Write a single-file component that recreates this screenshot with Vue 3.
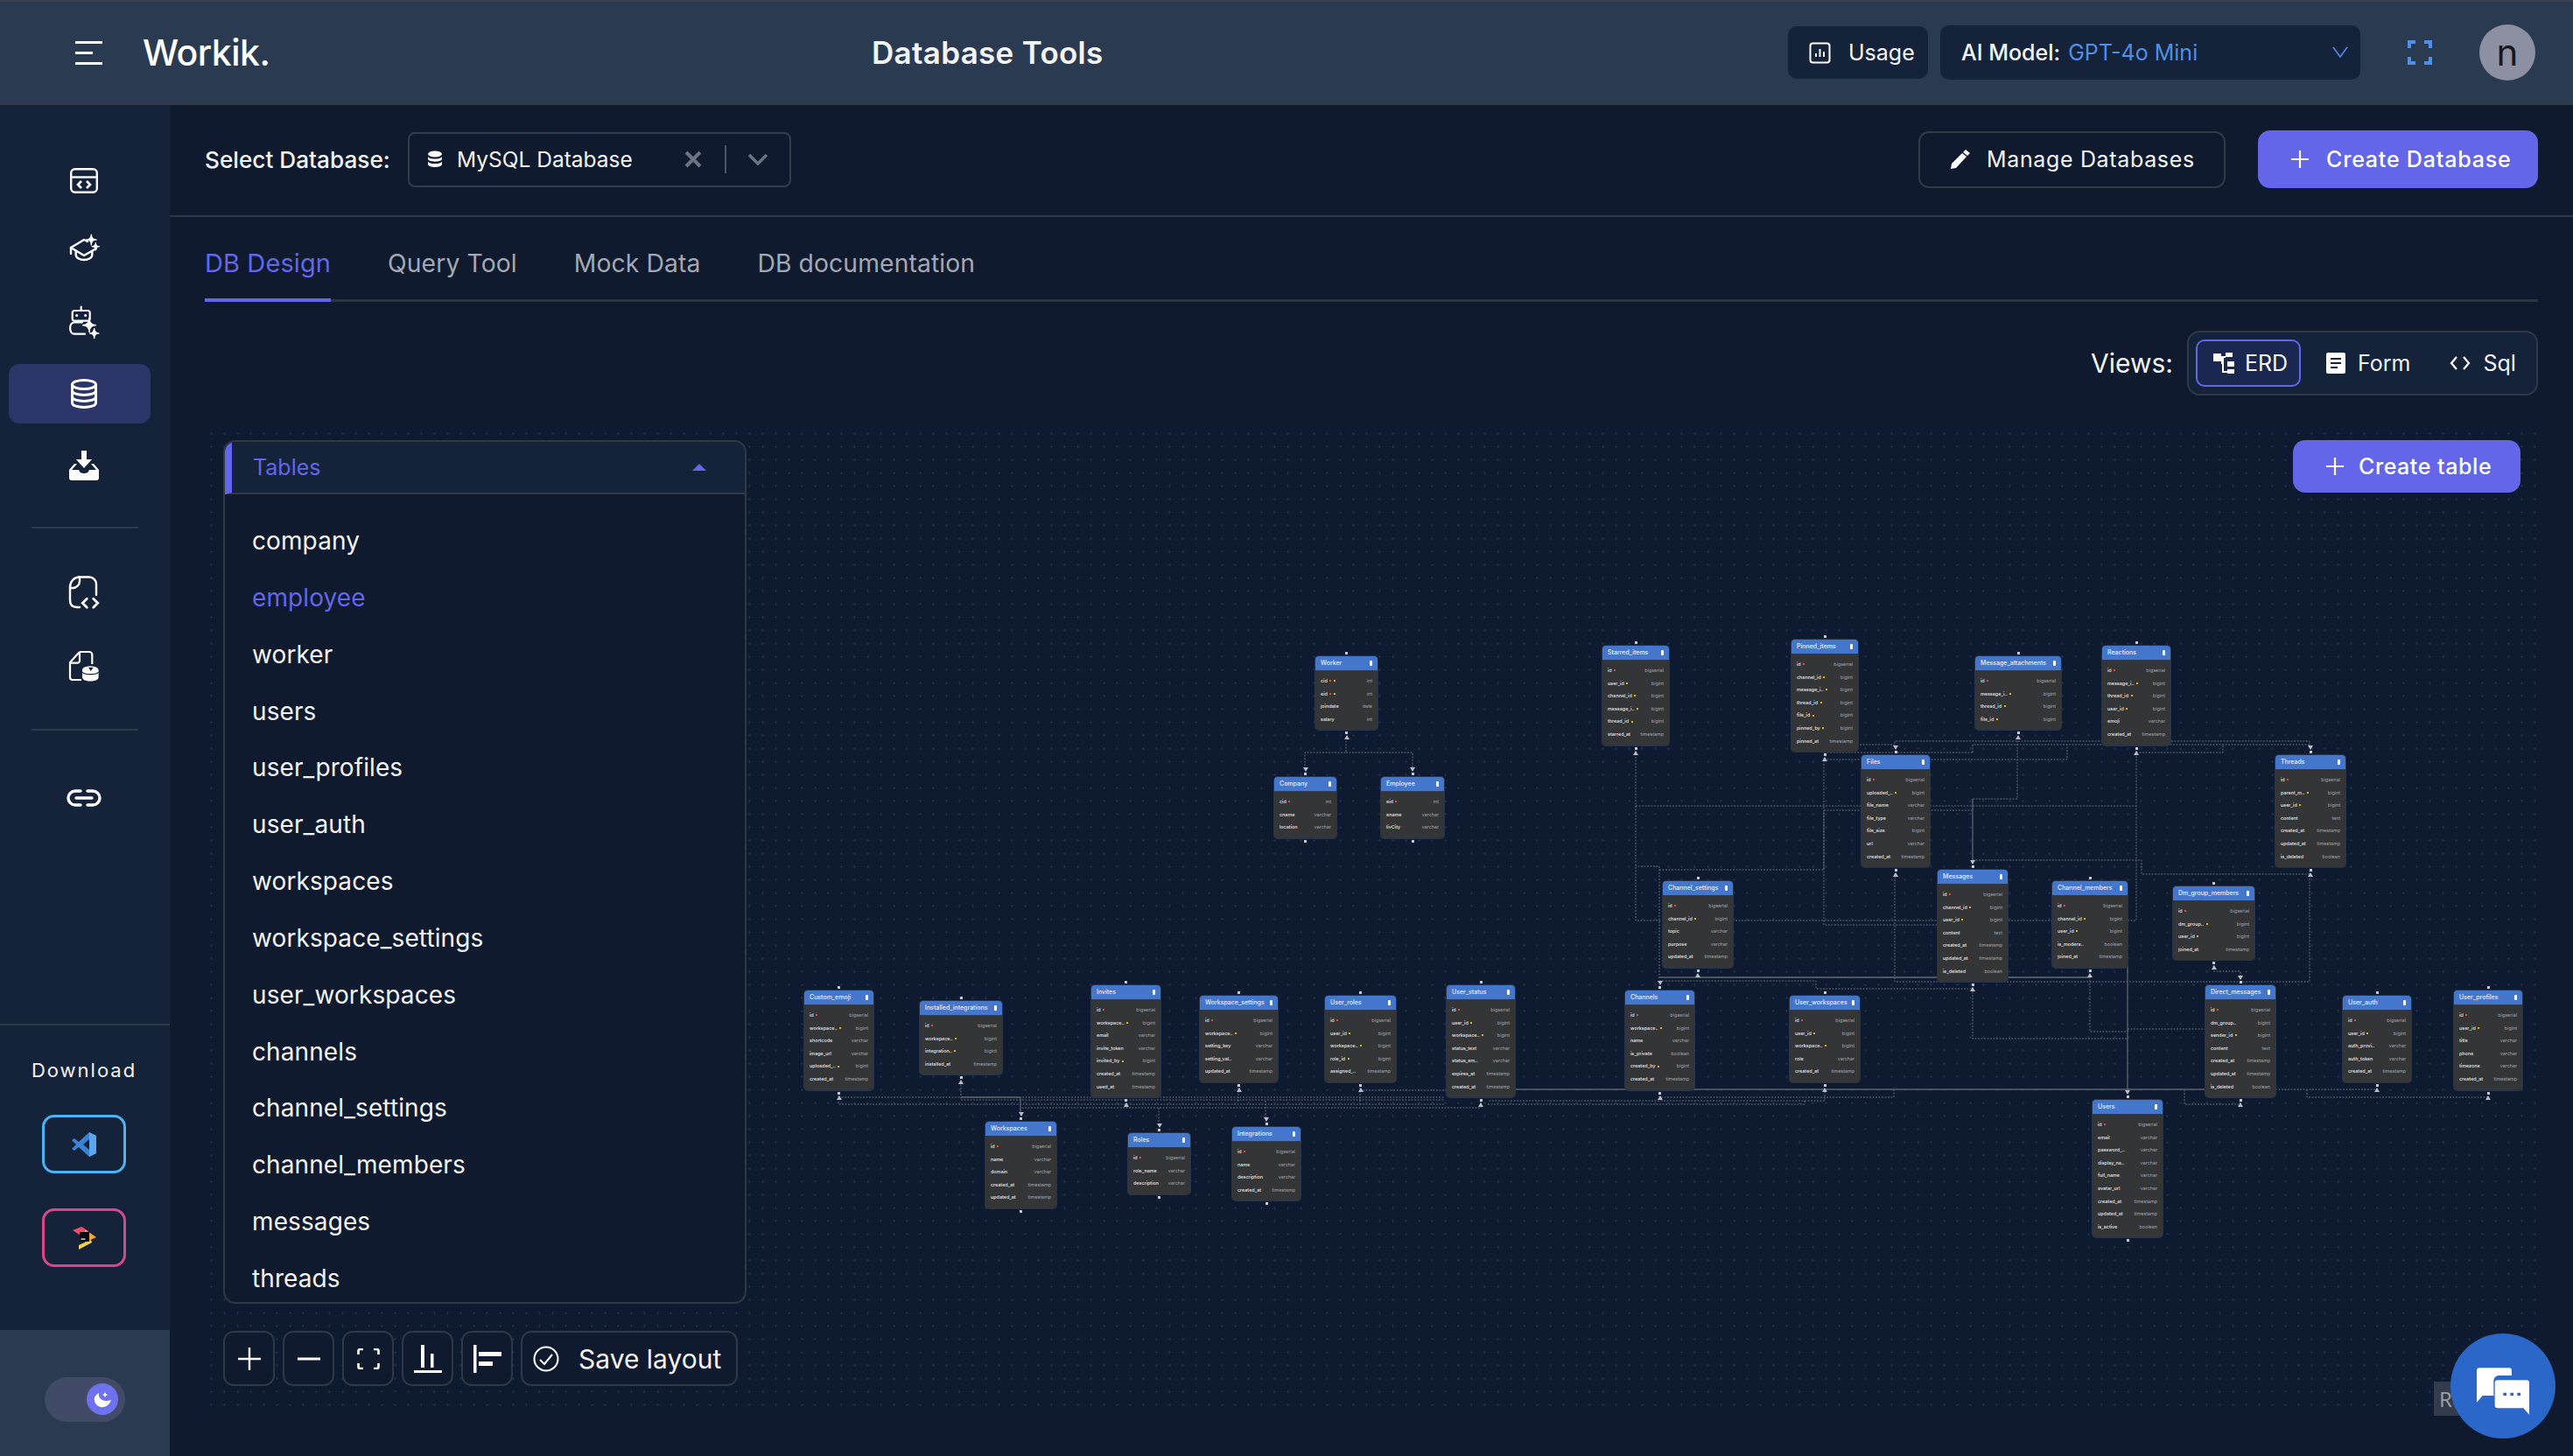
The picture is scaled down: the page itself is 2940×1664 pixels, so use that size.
<script setup>
const tables = ['company','employee','worker','users','user_profiles','user_auth','workspaces','workspace_settings','user_workspaces','channels','channel_settings','channel_members','messages','threads']

const T = { b: 'bigint', s: 'bigserial', v: 'varchar', t: 'timestamp', o: 'boolean', x: 'text', i: 'int', d: 'date' }
const parse = s => s.split(' ').map(f => {
  const [raw, ty] = f.split(':')
  const pk = raw.includes('*')
  const fk = raw.includes('+')
  return { name: raw.replace(/[*+]/g, ''), pk, fk, type: T[ty] }
})
const raw = [
  ['Worker',1503,751,71,'cid*+:i eid*+:i joindate:d salary:i',0,1],
  ['Company',1456,889,71,'cid*:i cname:v location:v',1,0],
  ['Employee',1578,889,72,'eid*:i ename:v livCity:v',1,0],
  ['Starred_items',1831,739,76,'id*:s user_id+:b channel_id+:b message_i..+:b thread_id+:b starred_at:t',0,1],
  ['Pinned_items',2047,732,76,'id*:s channel_id+:b message_i..+:b thread_id+:b file_id+:b pinned_by+:b pinned_at:t',0,1],
  ['Files',2127,864,78,'id*:s uploaded_..+:b file_name:v file_type:v file_size:b url:v created_at:t',1,1],
  ['Channel_settings',1900,1008,80,'id*:s channel_id+:b topic:v purpose:v updated_at:t',0,1],
  ['Message_attachments',2257,751,98,'id*:s message_i..+:b thread_id+:b file_id+:b',0,1],
  ['Reactions',2402,739,78,'id*:s message_i..+:b thread_id+:b user_id+:b emoji:v created_at:t',0,1],
  ['Threads',2600,864,80,'id*:s parent_m..+:b user_id+:b content:x created_at:t updated_at:t is_deleted:o',1,1],
  ['Messages',2214,995,80,'id*:s channel_id+:b user_id+:b content:x created_at:t updated_at:t is_deleted:o',1,1],
  ['Channel_members',2345,1008,86,'id*:s channel_id+:b user_id+:b is_modera..:o joined_at:t',0,1],
  ['Dm_group_members',2483,1014,93,'id*:s dm_group..+:b user_id+:b joined_at:t',0,1],
  ['Custom_emoji',919,1133,79,'id*:s workspace..+:b shortcode:v image_url:v uploaded_..+:b created_at:t',0,1],
  ['Installed_integrations',1051,1145,94,'id*:s workspace..+:b integration..+:b installed_at:t',0,1],
  ['Invites',1247,1127,79,'id*:s workspace..+:b email:v invite_token:v invited_by+:b created_at:t used_at:t',0,1],
  ['Workspace_settings',1371,1139,89,'id*:s workspace..+:b setting_key:v setting_val..:v updated_at:t',0,1],
  ['User_roles',1514,1139,81,'id*:s user_id+:b workspace..+:b role_id+:b assigned_..:t',0,1],
  ['User_status',1653,1127,78,'id*:s user_id+:b workspace..+:b status_text:v status_em..:v expires_at:t created_at:t',0,1],
  ['Workspaces',1126,1283,81,'id*:s name:v domain:v created_at:t updated_at:t',1,0],
  ['Roles',1289,1296,71,'id*:s role_name:v description:v',1,0],
  ['Integrations',1408,1289,78,'id*:s name:v description:v created_at:t',1,0],
  ['Channels',1857,1133,79,'id*:s workspace..+:b name:v is_private:o created_by+:b created_at:t',1,1],
  ['User_workspaces',2045,1139,80,'id*:s user_id+:b workspace..+:b role:v created_at:t',0,1],
  ['Direct_messages',2520,1127,80,'id*:s dm_group..:b sender_id+:b content:x created_at:t updated_at:t is_deleted:o',1,1],
  ['User_auth',2677,1139,78,'id*:s user_id+:b auth_provi..:v auth_token:v created_at:t',0,1],
  ['User_profiles',2804,1133,78,'id*:s user_id+:b title:v phone:v timezone:v created_at:t',0,1],
  ['Users',2391,1258,80,'id*:s email:v password_..:v display_na..:v full_name:v avatar_url:v created_at:t updated_at:t is_active:o',1,0],
]
const ORIGIN_X = 234
const ORIGIN_Y = 489
const nodes = raw.map(([title, x, y, w, f, top, bottom]) => ({
  title, top, bottom, fields: parse(f),
  style: { left: (x - ORIGIN_X) + 'px', top: (y - ORIGIN_Y) + 'px', width: w + 'px' },
}))

const dashed = [
  'M1538 845V862H1491V880M1538 862H1614V880',
  'M1869 860V1054H2441V860',
  'M1869 923H2441',
  'M2084 868V1059H2214',
  'M2084 928H2254',
  'M1896 1120V992H1869M1896 996H2084V930',
  'M1939 1115V1119H2388V1115',
  'M1896 1123H2075V1132H2254V1130',
  'M2254 1132V1189H2431',
  'M2388 1115V1181H2431V1178H2520',
  'M2165 1000V1124H2639V1000',
  'M2529 1105V1112H2560V1118',
  'M2254 985H2447V1001H2639',
  'M2305 845V915H2254',
  'M2165 855V849H2639V855',
  'M2125 853H2165M2254 862V853H2639',
  'M2084 862H2254M2084 870H2362V853',
  'M2441 862H2540V853',
  'M2600 1247H2716V1245',
  'M2164 1247V1256H1896V1255',
  'M2085 1246V1260H1700',
  'M2062 1260V1264H1700',
  'M2560 1262V1264H2496V1247',
  'M2842 1255V1256H2636V1247',
  'M958 1254V1264H1650M958 1256H1650',
  'M1098 1238V1259H1650',
  'M1287 1262V1268',
  'M1415 1245V1262',
  'M1554 1245V1266',
  'M1324 1268V1287',
  'M1446 1260V1280',
  'M1557 1248H1653',
  'M1692 1262V1268H1166',
]
const solid = [
  'M2254 915V985',
  'M2431 1106V1250',
  'M1731 1247H2520',
  'M1166 1256V1275',
  'M1896 1119H2388',
  'M1098 1256H1166',
]
</script>

<template>
  <div class="app">
    <header class="topbar">
      <div class="brand">
        <span class="burger"><i></i><i class="short"></i><i></i></span>
        <span class="logo">Workik.</span>
      </div>
      <div class="page-title">Database Tools</div>
      <div class="top-right">
        <button class="usage">
          <svg width="25" height="25" viewBox="0 0 25 25" fill="none" stroke="#fff" stroke-width="2"><rect x="1.5" y="1.5" width="22" height="22" rx="3"/><path d="M8 17v-4M12.5 17V8M17 17v-6"/></svg>
          <span>Usage</span>
        </button>
        <div class="model">
          <span class="model-label">AI Model:</span>
          <span class="model-val">GPT-4o Mini</span>
          <svg class="model-chev" width="18" height="14" viewBox="0 0 18 14" fill="none" stroke="#4f8fe8" stroke-width="1.6"><path d="M1 1l8 11 8-11"/></svg>
        </div>
        <svg class="fs" width="28" height="28" viewBox="0 0 28 28" fill="none" stroke="#4f8fe8" stroke-width="4"><path d="M2 9V2h7M19 2h7v7M26 19v7h-7M9 26H2v-7"/></svg>
        <div class="avatar">n</div>
      </div>
    </header>

    <div class="body">
      <aside class="side">
        <nav class="nav">
          <div class="nav-item">
            <svg width="40" height="40" viewBox="0 0 40 40" fill="none" stroke="#fff" stroke-width="2.400"><rect x="5.200" y="9.200" width="29.600" height="26.600" rx="4.500"/><path d="M5 18.500h30"/><path d="M17 23l-4 4 4 4M23 23l4 4-4 4" stroke-width="2.600"/></svg>
          </div>
          <div class="nav-item">
            <svg width="40" height="40" viewBox="0 0 40 40" fill="none" stroke="#fff" stroke-width="2.400" stroke-linejoin="round" stroke-linecap="round"><path d="M24 10L20 8 5 17l15 9 14-8"/><path d="M5 17v7"/><path d="M10.700 20.500V25c0 4 5 6 9.300 6s9.300-2 9.300-6v-4"/><path d="M28.300 2Q28.300 8 34.300 8 28.300 8 28.300 14 28.300 8 22.300 8 28.300 8 28.300 2zM33.300 11.500Q33.300 15.700 37.500 15.700 33.300 15.700 33.300 19.900 33.300 15.700 29.100 15.700 33.300 15.700 33.300 11.500z" fill="#fff" stroke="#fff" stroke-width="1.200"/></svg>
          </div>
          <div class="nav-item">
            <svg width="40" height="40" viewBox="0 0 40 40" fill="none" stroke="#fff" stroke-width="2.200" stroke-linecap="round"><rect x="6.700" y="7" width="20" height="11.700" rx="2.500"/><path d="M16.700 2.700V7"/><path d="M18 20.300H9c-6.500 0-6.500 13.400 0 13.400h12"/><circle cx="11.700" cy="12.500" r="1.500" fill="#fff" stroke="none"/><circle cx="21.700" cy="12.500" r="1.500" fill="#fff" stroke="none"/><path d="M26 15Q26 23.700 34 23.700 26 23.700 26 32 26 23.700 18 23.700 26 23.700 26 15zM31.700 27Q31.700 33 37.500 33 31.700 33 31.700 39 31.700 33 26 33 31.700 33 31.700 27z" fill="#fff" stroke="#fff" stroke-width="1.200"/></svg>
          </div>
          <div class="nav-item active">
            <svg width="32" height="34" viewBox="0 0 32 34" fill="none" stroke="#fff" stroke-width="3"><ellipse cx="16" cy="6.500" rx="13.500" ry="5"/><path d="M2.500 6.500v21c0 6.500 27 6.500 27 0v-21"/><path d="M2.500 13.500c0 6.500 27 6.500 27 0M2.500 20.500c0 6.500 27 6.500 27 0"/></svg>
          </div>
          <div class="nav-item">
            <svg width="36" height="34" viewBox="0 0 36 34" fill="#fff"><path d="M15 0h6v10h6l-9 10-9-10h6z"/><path d="M7 15h3l-6 7h8c1 3 3 4 6 4s5-1 6-4h8l-6-7h3l6 7v9a3 3 0 0 1-3 3H4a3 3 0 0 1-3-3v-9z"/></svg>
          </div>
        </nav>
        <hr class="sep first" />
        <div class="nav-item tool">
          <svg width="40" height="40" viewBox="0 0 40 40" fill="none" stroke="#fff" stroke-width="2.400" stroke-linecap="round" stroke-linejoin="round"><path d="M14 2.500H26a8 8 0 0 1 8 8V23"/><path d="M14 2.500C8 3 4 8 4 14v15c0 5 3 8 8 8h3"/><path d="M4 15h3a8 8 0 0 0 8-8V3"/><path d="M23.300 27.300l-5 5 5 5M30.700 27.300l5 5-5 5" stroke-width="2.800" stroke-linejoin="miter"/></svg>
        </div>
        <div class="nav-item tool second">
          <svg width="40" height="40" viewBox="0 0 40 40" fill="none" stroke="#fff" stroke-width="2.200" stroke-linejoin="round"><path d="M15 4h11a3.300 3.300 0 0 1 3.300 3.300V18"/><path d="M15 4L4 16v17a3 3 0 0 0 3 3h10"/><path d="M15 4v10a2.700 2.700 0 0 1-2.700 2.700H4"/><path d="M18 25c0-6.500 18.600-6.500 18.600 0v8c0 6-18.600 6-18.600 0z" fill="#fff" stroke="none"/><path d="M25 21.700h5.700L27.700 26z" fill="#14233a" stroke="none"/><path d="M18 27c2 3.500 16.600 3.500 18.600 0" stroke="#14233a" stroke-width="1.200"/></svg>
        </div>
        <hr class="sep" />
        <div class="nav-item link">
          <svg width="40" height="20" viewBox="0 0 40 20" fill="none" stroke="#fff" stroke-width="3.400" stroke-linecap="round"><path d="M16 2H10a8 8 0 0 0 0 16h6M24 2h6a8 8 0 0 1 0 16h-6M11 10h18"/></svg>
        </div>
        <div class="side-spacer"></div>
        <div class="download">
          <div class="dl-title">Download</div>
          <div class="dl-btn vs">
            <svg width="30" height="30" viewBox="0 0 30 30"><path d="M21 1l8 4v20l-8 4-12-11-5 4-3-2 5-5-5-5 3-2 5 4z" fill="#3b82d6"/><path d="M21 1l8 4v20l-8 4z" fill="#5aa7ee"/><path d="M21 9l-7 6 7 6z" fill="#14233a"/></svg>
          </div>
          <div class="dl-btn jb">
            <svg width="27" height="26" viewBox="0 0 27 26"><path d="M0 4l10-4 8 5-9 5z" fill="#ef4b6c"/><path d="M14 3l13 9-13 6z" fill="#f5a63a"/><path d="M7 21l14-6 1 3-15 8z" fill="#f7d23e"/><rect x="8" y="6" width="11" height="11" fill="#0b0b0b"/><rect x="9.500" y="13.500" width="5" height="1.200" fill="#fff"/></svg>
          </div>
        </div>
        <div class="theme">
          <div class="toggle">
            <div class="knob">
              <svg width="24" height="22" viewBox="0 0 24 22" fill="#fff"><path d="M8 4c-1 6 4 11 14 8-2 6-7 9-12 8S2 14 3 9c1-2 3-4 5-5z"/><path d="M15 3l1 2 2 1-2 1-1 2-1-2-2-1 2-1z"/></svg>
            </div>
          </div>
        </div>
      </aside>

      <main class="main">
        <section class="toolbar">
          <span class="sel-label">Select Database:</span>
          <div class="select">
            <svg width="18" height="20" viewBox="0 0 18 20" fill="#fff"><ellipse cx="9" cy="4" rx="8" ry="3.500"/><path d="M1 7c1 3.500 15 3.500 16 0v3c-1 3.500-15 3.500-16 0zM1 12.500c1 3.500 15 3.500 16 0v3.500c-1 4-15 4-16 0z"/></svg>
            <span class="sel-val">MySQL Database</span>
            <svg class="sel-x" width="20" height="20" viewBox="0 0 20 20" fill="none" stroke="#6b7280" stroke-width="4"><path d="M2 2l16 16M18 2L2 18"/></svg>
            <span class="sel-div"></span>
            <svg width="24" height="14" viewBox="0 0 24 14" fill="none" stroke="#6b7280" stroke-width="3.600"><path d="M2 2l10 10L22 2"/></svg>
          </div>
          <div class="toolbar-right">
            <button class="ghost">
              <svg width="24" height="24" viewBox="0 0 24 24" fill="#fff"><path d="M18 1l5 4-3 3-5-4zM14 5l5 4L7 22l-6 1 1-6z"/></svg>
              Manage Databases
            </button>
            <button class="primary db">
              <svg width="20" height="20" viewBox="0 0 20 20" stroke="#fff" stroke-width="2.200"><path d="M10 0v20M0 10h20"/></svg>
              Create Database
            </button>
          </div>
        </section>

        <section class="tabs">
          <div class="tab on">DB Design</div>
          <div class="tab">Query Tool</div>
          <div class="tab">Mock Data</div>
          <div class="tab">DB documentation</div>
        </section>

        <section class="views">
          <span class="views-label">Views:</span>
          <div class="view-group">
            <div class="view on">
              <svg width="24" height="24" viewBox="0 0 24 24" fill="#fff"><rect x="0" y="1" width="9" height="9"/><rect x="14" y="0" width="8" height="5"/><rect x="16" y="10" width="8" height="6"/><rect x="16" y="19" width="8" height="5"/><path d="M9 4h5v2h-2v15h4v2h-6V13H9z"/></svg>
              ERD
            </div>
            <div class="view form">
              <svg width="22" height="24" viewBox="0 0 22 24"><rect width="22" height="24" rx="2" fill="#fff"/><path d="M5 7h12M5 12h12M5 17h8" stroke="#14233a" stroke-width="2.200"/></svg>
              Form
            </div>
            <div class="view sql">
              <svg width="24" height="18" viewBox="0 0 24 18" fill="none" stroke="#fff" stroke-width="2.200"><path d="M8 2L2 9l6 7M16 2l6 7-6 7"/></svg>
              Sql
            </div>
          </div>
        </section>

        <section class="canvas">
          <svg class="edges" width="2666" height="1128" viewBox="234 490 2666 1128" fill="none">
            <path v-for="d in dashed" :key="d" :d="d" stroke="#636c7a" stroke-width="1" stroke-dasharray="2 1.500" />
            <path v-for="d in solid" :key="d" :d="d" stroke="#5c6470" stroke-width="1.300" />
          </svg>

          <div v-for="n in nodes" :key="n.title" class="node" :style="n.style">
            <span class="handle top"></span>
            <span v-if="n.top" class="arrow down"></span>
            <span class="handle bot"></span>
            <span v-if="n.bottom" class="arrow up"></span>
            <div class="node-head">
              <span class="node-title">{{ n.title }}</span>
              <i class="node-menu"></i>
            </div>
            <div class="node-body">
              <div v-for="f in n.fields" :key="f.name" class="row">
                <span class="fname">{{ f.name }}</span>
                <i v-if="f.pk" class="dot pk"></i>
                <i v-if="f.fk" class="dot fk"></i>
                <span class="ftype">{{ f.type }}</span>
              </div>
            </div>
          </div>

          <div class="panel">
            <div class="panel-head">
              <span>Tables</span>
              <i class="caret"></i>
            </div>
            <div class="panel-list">
              <div v-for="t in tables" :key="t" class="item" :class="{ sel: t === 'employee' }">{{ t }}</div>
            </div>
          </div>

          <div class="controls">
            <button class="ctl">
              <svg width="26" height="26" viewBox="0 0 26 26" stroke="#fff" stroke-width="2.400"><path d="M13 0v26M0 13h26"/></svg>
            </button>
            <button class="ctl">
              <svg width="26" height="4" viewBox="0 0 26 4" stroke="#fff" stroke-width="3"><path d="M0 2h26"/></svg>
            </button>
            <button class="ctl">
              <svg width="26" height="24" viewBox="0 0 26 24" fill="none" stroke="#fff" stroke-width="2.600"><path d="M1.500 7V3a2 2 0 0 1 2-2H7M19 1h3.500a2 2 0 0 1 2 2v4M24.500 17v4a2 2 0 0 1-2 2H19M7 23H3.500a2 2 0 0 1-2-2v-4"/></svg>
            </button>
            <button class="ctl">
              <svg width="32" height="32" viewBox="0 0 32 32" fill="#fff"><rect x="8" y="0" width="4" height="26"/><rect x="19" y="10" width="3.500" height="16"/><rect x="0" y="29" width="32" height="3"/></svg>
            </button>
            <button class="ctl">
              <svg width="32" height="32" viewBox="0 0 32 32" fill="#fff"><rect x="0" y="0" width="3.500" height="32"/><rect x="6" y="8" width="26" height="5"/><rect x="6" y="19" width="16" height="5"/></svg>
            </button>
            <button class="ctl save">
              <svg width="30" height="30" viewBox="0 0 30 30" fill="none" stroke="#fff" stroke-width="2"><circle cx="15" cy="15" r="13.500"/><path d="M8 16l5 5 9-11"/></svg>
              <span>Save layout</span>
            </button>
          </div>

          <button class="primary add-table">
            <svg width="20" height="20" viewBox="0 0 20 20" stroke="#fff" stroke-width="2.200"><path d="M10 0v20M0 10h20"/></svg>
            Create table
          </button>
        </section>
      </main>
    </div>

    <div class="recaptcha">Re</div>
    <div class="chat">
      <svg width="120" height="120" viewBox="0 0 360 360">
        <circle cx="180" cy="180" r="180" fill="#2b67c8"/>
        <path d="M100 118h100a10 10 0 0 1 10 10v16h-44a18 18 0 0 0-18 18v51H110l-20 23V128a10 10 0 0 1 10-10z" fill="#fff"/>
        <path d="M162 160h98a10 10 0 0 1 10 10v108l-20-22H162a10 10 0 0 1-10-10v-76a10 10 0 0 1 10-10z" fill="#fff"/>
        <path d="M181 203h11v10h-11zM205 203h11v10h-11zM229 203h11v10h-11z" fill="#2b67c8"/>
      </svg>
    </div>
  </div>
</template>

<style scoped>
.app { width: 2940px; height: 1664px; display: flex; flex-direction: column; overflow: hidden; background: #0f1a2e; color: #f3f4f6; font-family: Inter, "Noto Sans", "Liberation Sans", sans-serif; position: relative; }
button { font-family: inherit; cursor: pointer; }

.topbar { flex: 0 0 120px; box-sizing: border-box; display: flex; align-items: center; background: #2a3a50; border-top: 2px solid #3a424f; border-bottom: 2px solid #333b48; }
.brand { flex: 0 0 996px; display: flex; align-items: center; padding-left: 86px; box-sizing: border-box; gap: 46px; }
.burger { display: flex; flex-direction: column; gap: 9px; width: 31px; }
.burger i { display: block; height: 3px; background: #fff; }
.burger i.short { width: 20px; }
.logo { font-size: 41px; font-weight: 500; color: #fff; letter-spacing: -0.5px; }
.page-title { font-size: 35px; font-weight: 600; color: #f3f4f6; letter-spacing: 0.3px; }
.top-right { margin-left: auto; display: flex; align-items: center; padding-right: 43px; }
.usage { width: 160px; height: 60px; display: flex; align-items: center; gap: 20px; padding: 0 0 0 24px; border: 0; border-radius: 10px; background: #15233a; color: #f3f4f6; font-size: 25px; font-weight: 400; box-sizing: border-box; }
.model { width: 480px; height: 62px; margin-left: 14px; box-sizing: border-box; display: flex; align-items: center; padding: 0 14px 0 24px; background: #15233a; border-radius: 10px; font-size: 25px; }
.model-label { color: #f3f4f6; font-weight: 500; }
.model-val { color: #4f8fe8; margin-left: 9px; }
.model-chev { margin-left: auto; }
.fs { margin-left: 54px; }
.avatar { width: 64px; height: 64px; margin-left: 54px; border-radius: 50%; background: #8d8fa3; color: #14171f; display: flex; align-items: center; justify-content: center; font-size: 42px; line-height: 1; }

.body { flex: 1; display: flex; min-height: 0; }
.side { flex: 0 0 194px; background: #14233a; display: flex; flex-direction: column; }
.nav { display: flex; flex-direction: column; gap: 14px; padding-top: 50px; }
.nav-item { width: 162px; height: 68px; margin-left: 10px; padding-left: 10px; box-sizing: border-box; border-radius: 12px; display: flex; align-items: center; justify-content: center; flex: none; }
.nav-item.active { background: #2b3568; }
.sep { border: 0; height: 2px; background: #2e3a4c; width: 122px; margin: 0 0 0 36px; flex: none; }
.sep.first { margin-top: 36px; margin-bottom: 39px; }
.tool.second { margin-top: 16px; margin-bottom: 38px; }
.link { margin-top: 43px; }
.side-spacer { flex: 1; }
.download { height: 350px; flex: none; box-sizing: border-box; border-top: 2px solid #2c3748; display: flex; flex-direction: column; align-items: center; padding-right: 2px; }
.dl-title { margin-top: 38px; font-size: 22px; letter-spacing: 2px; color: #f3f4f6; line-height: 26px; font-weight: 400; }
.dl-btn { width: 96px; height: 67px; box-sizing: border-box; border-radius: 14px; border: 3px solid; display: flex; align-items: center; justify-content: center; background: #14233a; }
.dl-btn.vs { margin-top: 38px; border-color: #4db3f5; }
.dl-btn.jb { margin-top: 40px; border-color: #d9478c; }
.theme { height: 144px; flex: none; background: #2a3a50; display: flex; align-items: center; padding-left: 51px; box-sizing: border-box; padding-top: 14px; }
.toggle { width: 92px; height: 51px; border-radius: 26px; background: #414b68; display: flex; align-items: center; justify-content: flex-end; padding-right: 8px; box-sizing: border-box; }
.knob { width: 36px; height: 36px; border-radius: 50%; background: #6f72ee; display: flex; align-items: center; justify-content: center; }

.main { flex: 1; min-width: 0; display: flex; flex-direction: column; }
.toolbar { height: 128px; flex: none; box-sizing: border-box; border-bottom: 2px solid #2f3846; display: flex; align-items: center; padding: 0 40px 2px; }
.sel-label { flex: 0 0 211px; min-width: 0; font-size: 26.200px; font-weight: 500; color: #f3f4f6; white-space: nowrap; }
.select { width: 438px; height: 63px; margin-left: 21px; box-sizing: border-box; border: 2px solid #323d4c; border-radius: 8px; display: flex; align-items: center; padding: 0 24px 0 20px; }
.sel-val { font-size: 24.500px; margin-left: 16px; font-weight: 400; color: #f3f4f6; }
.sel-x { margin-left: auto; }
.sel-div { width: 2px; height: 32px; background: #4b5563; margin: 0 24px 0 26px; }
.toolbar-right { margin-left: auto; display: flex; align-items: center; gap: 37px; }
.ghost { width: 351px; height: 65px; box-sizing: border-box; border: 2px solid #323a47; border-radius: 12px; background: transparent; color: #f3f4f6; font-size: 25px; display: flex; align-items: center; gap: 18px; padding: 0 0 0 34px; letter-spacing: 0.65px; }
.primary { border: 0; background: #6366e8; color: #fff; display: flex; align-items: center; box-sizing: border-box; font-weight: 500; }
.db { width: 320px; height: 66px; border-radius: 14px; padding-left: 38px; gap: 20px; font-size: 25px; letter-spacing: 0.8px; }

.tabs { height: 97px; flex: none; margin: 0 40px; box-sizing: border-box; border-bottom: 3px solid #2b3442; display: flex; gap: 65px; }
.tab { height: 97px; box-sizing: border-box; font-size: 28.300px; color: #a3a8b2; padding-top: 33px; line-height: 40px; letter-spacing: 0.1px; }
.tab.on { font-size: 29px; color: #6366e8; border-bottom: 4px solid #6366e8; }

.views { height: 143px; flex: none; box-sizing: border-box; padding: 33px 40px 36px 0; display: flex; align-items: center; justify-content: flex-end; gap: 16px; }
.views-label { font-size: 30px; color: #f3f4f6; }
.view-group { width: 401px; height: 74px; box-sizing: border-box; border: 2px solid #2f3846; border-radius: 14px; background: #15233a; display: flex; align-items: center; padding-left: 8px; }
.view { display: flex; align-items: center; font-size: 25px; color: #f3f4f6; gap: 14px; }
.view.on { width: 120px; height: 54px; box-sizing: border-box; padding-left: 18px; border: 2px solid #6366e8; border-radius: 10px; background: #1a2750; gap: 12px; }
.view.form { margin-left: 29px; }
.view.sql { margin-left: 45px; }

.canvas { position: relative; flex: none; margin: 0 40px; height: 1128px; background-color: #0d1a2f; background-image: radial-gradient(circle, #212e44 1px, transparent 1.2px); background-size: 15px 15px; }
.edges { position: absolute; left: 0; top: 0; }

.node { position: absolute; background: #343536; border-radius: 4px; box-shadow: 0 0 0 1px #27334a; font-size: 5.4px; line-height: 14.6px; }
.node-head { height: 17px; box-sizing: border-box; background: #4477cc; border-radius: 4px 4px 0 0; border-bottom: 1px solid #2b3a52; display: flex; align-items: center; justify-content: space-between; padding: 0 6px; }
.node-title { font-size: 7px; font-weight: 500; color: #e5ecf7; white-space: nowrap; }
.node-menu { width: 3px; height: 6px; background: #fff; border-radius: 1px; }
.node-body { padding: 4px 6px 5px; }
.row { height: 14.6px; display: flex; align-items: center; }
.fname { color: #e5e7eb; font-weight: 500; white-space: nowrap; }
.ftype { color: #a1a5ad; margin-left: auto; white-space: nowrap; }
.dot { width: 2px; height: 2px; margin-left: 2.500px; background: #ef4444; flex: none; }
.dot.fk { background: #eab308; }
.handle { position: absolute; left: 50%; width: 3px; height: 3px; margin-left: -1.500px; background: #c4c8d0; }
.handle.top { top: -5px; }
.handle.bot { bottom: -5px; }
.arrow { position: absolute; left: 50%; margin-left: -3px; width: 0; height: 0; border-left: 3px solid transparent; border-right: 3px solid transparent; }
.arrow.down { top: -11px; border-top: 5px solid #b8bdc6; }
.arrow.up { bottom: -11px; border-bottom: 5px solid #b8bdc6; }

.panel { position: absolute; left: 21px; top: 15px; width: 598px; height: 987px; box-sizing: border-box; border: 2px solid #2f3846; border-radius: 14px; background: #0f1a2e; overflow: hidden; }
.panel-head { height: 60px; box-sizing: border-box; background: #15233a; border-left: 8px solid #6366e8; border-bottom: 2px solid #2f3846; display: flex; align-items: center; padding: 0 44px 0 24px; justify-content: space-between; color: #6366e8; font-size: 25px; }
.caret { width: 0; height: 0; border-left: 8px solid transparent; border-right: 8px solid transparent; border-bottom: 8px solid #6366e8; }
.panel-list { padding: 21px 0 0 31px; }
.item { height: 64.85px; line-height: 64.85px; font-size: 28px; color: #f3f4f6; letter-spacing: 0.1px; }
.item.sel { color: #6366e8; }

.controls { position: absolute; left: 21px; top: 1033px; display: flex; gap: 9px; }
.ctl { width: 59px; height: 63px; padding: 0; box-sizing: border-box; border: 2px solid #2f3846; border-radius: 12px; background: #0f1a2e; display: flex; align-items: center; justify-content: center; color: #f3f4f6; }
.ctl.save { width: 248px; justify-content: flex-start; padding-left: 12px; gap: 22px; font-size: 30px; }

.add-table { position: absolute; left: 2386px; top: 15px; width: 260px; height: 60px; border-radius: 14px; padding-left: 38px; gap: 17px; font-size: 25px; letter-spacing: 0.55px; }

.recaptcha { position: absolute; left: 2781px; top: 1579px; width: 90px; height: 39px; background: #343b4a; color: #9a9ea6; font-size: 24px; line-height: 39px; padding-left: 6px; box-sizing: border-box; font-family: "Noto Sans", sans-serif; }
.chat { position: absolute; left: 2800px; top: 1524px; width: 120px; height: 120px; }
</style>

<style>
html, body { margin: 0; background: #0f1a2e; }
</style>
